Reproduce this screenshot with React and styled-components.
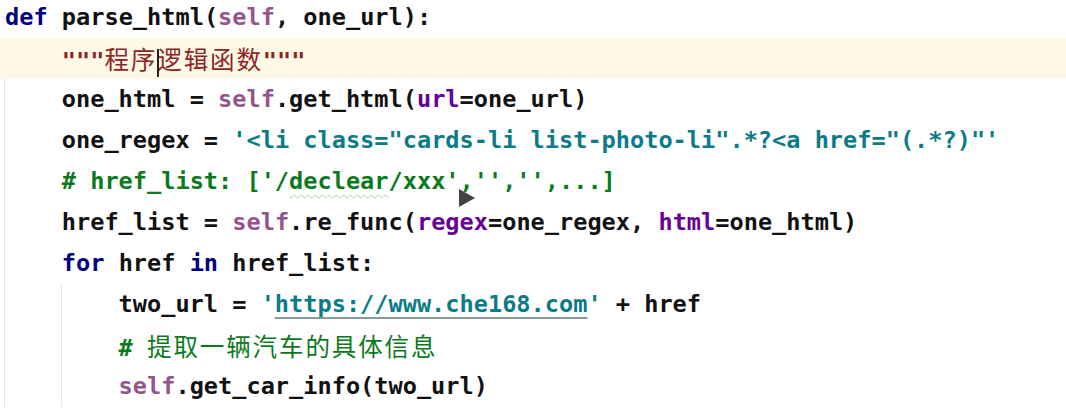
import React from 'react'
import styled, { createGlobalStyle } from 'styled-components'

const GlobalStyle = createGlobalStyle`
  html, body {
    margin: 0;
    padding: 0;
    background: #ffffff;
  }
  body {
    width: 1066px;
    height: 412px;
    overflow: hidden;
  }
`;

function App() {
  return (
    <>
      <GlobalStyle />
      <Editor>
        <Line>
          <Kw>def</Kw> parse_html(<Self>self</Self>, one_url):
        </Line>
        <Block>
          <Line current>
            <Doc>"""<Cjk>程序</Cjk><Caret /><Cjk>逻辑函数</Cjk>"""</Doc>
          </Line>
          <Line>
            one_html = <Self>self</Self>.get_html(<Param>url</Param>=one_url)
          </Line>
          <Line>
            one_regex = <Str>'&lt;li class="cards-li list-photo-li".*?&lt;a href="(.*?)"'</Str>
          </Line>
          <Line>
            <Cmt># href_list: ['/<Typo>declear</Typo>/xxx','','',...]</Cmt>
          </Line>
          <Line>
            href_list = <Self>self</Self>.re_func(<Param>regex</Param>=one_regex, <Param>html</Param>=one_html)
          </Line>
          <Line>
            <Kw>for</Kw> href <Kw>in</Kw> href_list:
          </Line>
          <Block>
            <Line>
              two_url = <Str>'<Link>https://www.che168.com</Link>'</Str> + href
            </Line>
            <Line>
              <Cmt># <Cjk>提取一辆汽车的具体信息</Cjk></Cmt>
            </Line>
            <Line>
              <Self>self</Self>.get_car_info(two_url)
            </Line>
          </Block>
        </Block>
        <PlayMark />
      </Editor>
    </>
  )
}

export default App

const Editor = styled.div`
  position: relative;
  margin-top: -3px;
  padding-left: 5px;
  font-family: "DejaVu Sans Mono", "Liberation Mono", monospace;
  font-size: 23.6px;
  font-weight: 700;
  color: #111;
`;

const Block = styled.div`
  margin-left: -1px;
  border-left: 1px solid #e6e6e6;
  padding-left: 56.8px;
`;

const Line = styled.div`
  height: 41px;
  line-height: 41px;
  white-space: pre;
  margin-left: ${p => (p.current ? '-200px' : '0')};
  padding-left: ${p => (p.current ? '200px' : '0')};
  background: ${p => (p.current ? '#fef8e7' : 'transparent')};
`;

const Kw = styled.span`
  color: #000080;
`;

const Self = styled.span`
  color: #94558d;
`;

const Param = styled.span`
  color: #660099;
`;

const Str = styled.span`
  color: #0c7b88;
`;

const Cmt = styled.span`
  color: #0b7a1d;
`;

const Doc = styled.span`
  color: #8e2424;
`;

const Cjk = styled.span`
  font-family: "Noto Sans CJK SC", sans-serif;
  font-weight: 400;
  font-size: 24.5px;
  letter-spacing: 1.9px;
`;

const Typo = styled.span`
  text-decoration: underline wavy #a9cfa9;
  text-decoration-thickness: 1px;
  text-underline-offset: 5px;
`;

const Link = styled.span`
  text-decoration: underline #8a9a9c;
  text-decoration-thickness: 2px;
  text-underline-offset: 5px;
`;

const Caret = styled.span`
  display: inline-block;
  width: 0;
  height: 28px;
  vertical-align: middle;
  border-left: 2px solid #222;
  margin-right: -2px;
`;

const PlayMark = styled.div`
  position: absolute;
  left: 459px;
  top: 192px;
  width: 0;
  height: 0;
  border-top: 9px solid transparent;
  border-bottom: 9px solid transparent;
  border-left: 16px solid #2e2e2e;
  opacity: 0.9;
`;
